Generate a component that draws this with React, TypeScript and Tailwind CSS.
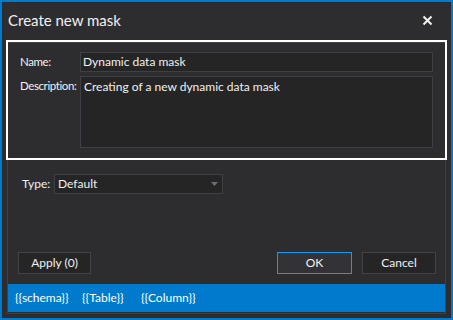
const font = { fontFamily: 'Lato, "Liberation Sans", sans-serif' }

function Field({ label, children, top }: { label: string; children: React.ReactNode; top?: boolean }) {
  return (
    <div className={`flex ${top ? 'items-start' : 'items-center'}`}>
      <span
        className={`w-[60px] shrink-0 whitespace-nowrap text-[11.5px] tracking-[-0.4px] text-[#f1f1f1] ${top ? 'pt-[1px]' : ''}`}
      >
        {label}
      </span>
      {children}
    </div>
  )
}

export default function App() {
  return (
    <div
      className="w-[453px] h-[320px] border-2 border-[#007acc] bg-[#2d2d30] flex flex-col select-none"
      style={font}
    >
      {/* title bar */}
      <div className="h-[36px] shrink-0 flex items-center justify-between pl-[6px] pr-[18px]">
        <span className="text-[15px] text-[#f1f1f1]">Create new mask</span>
        <svg width="11" height="11" viewBox="0 0 11 11" className="text-[#f1f1f1]">
          <path d="M1.5 1.5 L9.5 9.5 M9.5 1.5 L1.5 9.5" stroke="currentColor" strokeWidth="2" />
        </svg>
      </div>

      {/* main panel */}
      <div className="mx-[5px] mt-[4px] mb-[4px] flex-1 border border-[#3f3f46] flex flex-col">
        {/* highlighted section */}
        <div className="-mx-[2px] -mt-[3px] h-[120px] border-2 border-white pt-[10px] pl-[12px] pr-[12px] flex flex-col gap-[4px]">
          <Field label="Name:">
            <div className="flex-1 h-[20px] bg-[#252526] border border-[#3f3f46] flex items-center pl-[2px] text-[12px] text-[#f1f1f1]">
              Dynamic data mask
            </div>
          </Field>
          <Field label="Description:" top>
            <div className="flex-1 h-[72px] bg-[#252526] border border-[#3f3f46] pl-[3px] pt-[1px] text-[12px] text-[#f1f1f1]">
              Creating of a new dynamic data mask
            </div>
          </Field>
        </div>

        {/* type row */}
        <div className="mt-[14px] flex items-center pl-[14px]">
          <span className="w-[32px] text-[12px] text-[#f1f1f1]">Type:</span>
          <div className="w-[169px] h-[20px] bg-[#252526] border border-[#3f3f46] flex items-center justify-between pl-[3px] pr-[4px] text-[12px] text-[#f1f1f1]">
            <span>Default</span>
            <svg width="7" height="4" viewBox="0 0 7 4">
              <path d="M0 0 H7 L3.5 4 Z" fill="#6d6d70" />
            </svg>
          </div>
        </div>

        {/* buttons */}
        <div className="mt-auto flex items-center pl-[10px] pr-[9px] mb-[10px]">
          <button className="w-[73px] h-[22px] bg-[#252526] border border-[#434346] text-[12px] text-[#f1f1f1]">
            Apply (0)
          </button>
          <div className="flex-1" />
          <button className="w-[75px] h-[22px] bg-[#333337] border border-[#1c97ea] text-[12px] text-[#f1f1f1]">
            OK
          </button>
          <button className="ml-[10px] w-[74px] h-[22px] bg-[#252526] border border-[#434346] text-[12px] text-[#f1f1f1]">
            Cancel
          </button>
        </div>

        {/* variables bar */}
        <div className="h-[28px] mb-[1px] bg-[#007acc] flex items-center pl-[7px] text-[12px] text-white">
          <span className="w-[67px]">{'{{schema}}'}</span>
          <span className="w-[59px]">{'{{Table}}'}</span>
          <span>{'{{Column}}'}</span>
        </div>
      </div>
    </div>
  )
}
